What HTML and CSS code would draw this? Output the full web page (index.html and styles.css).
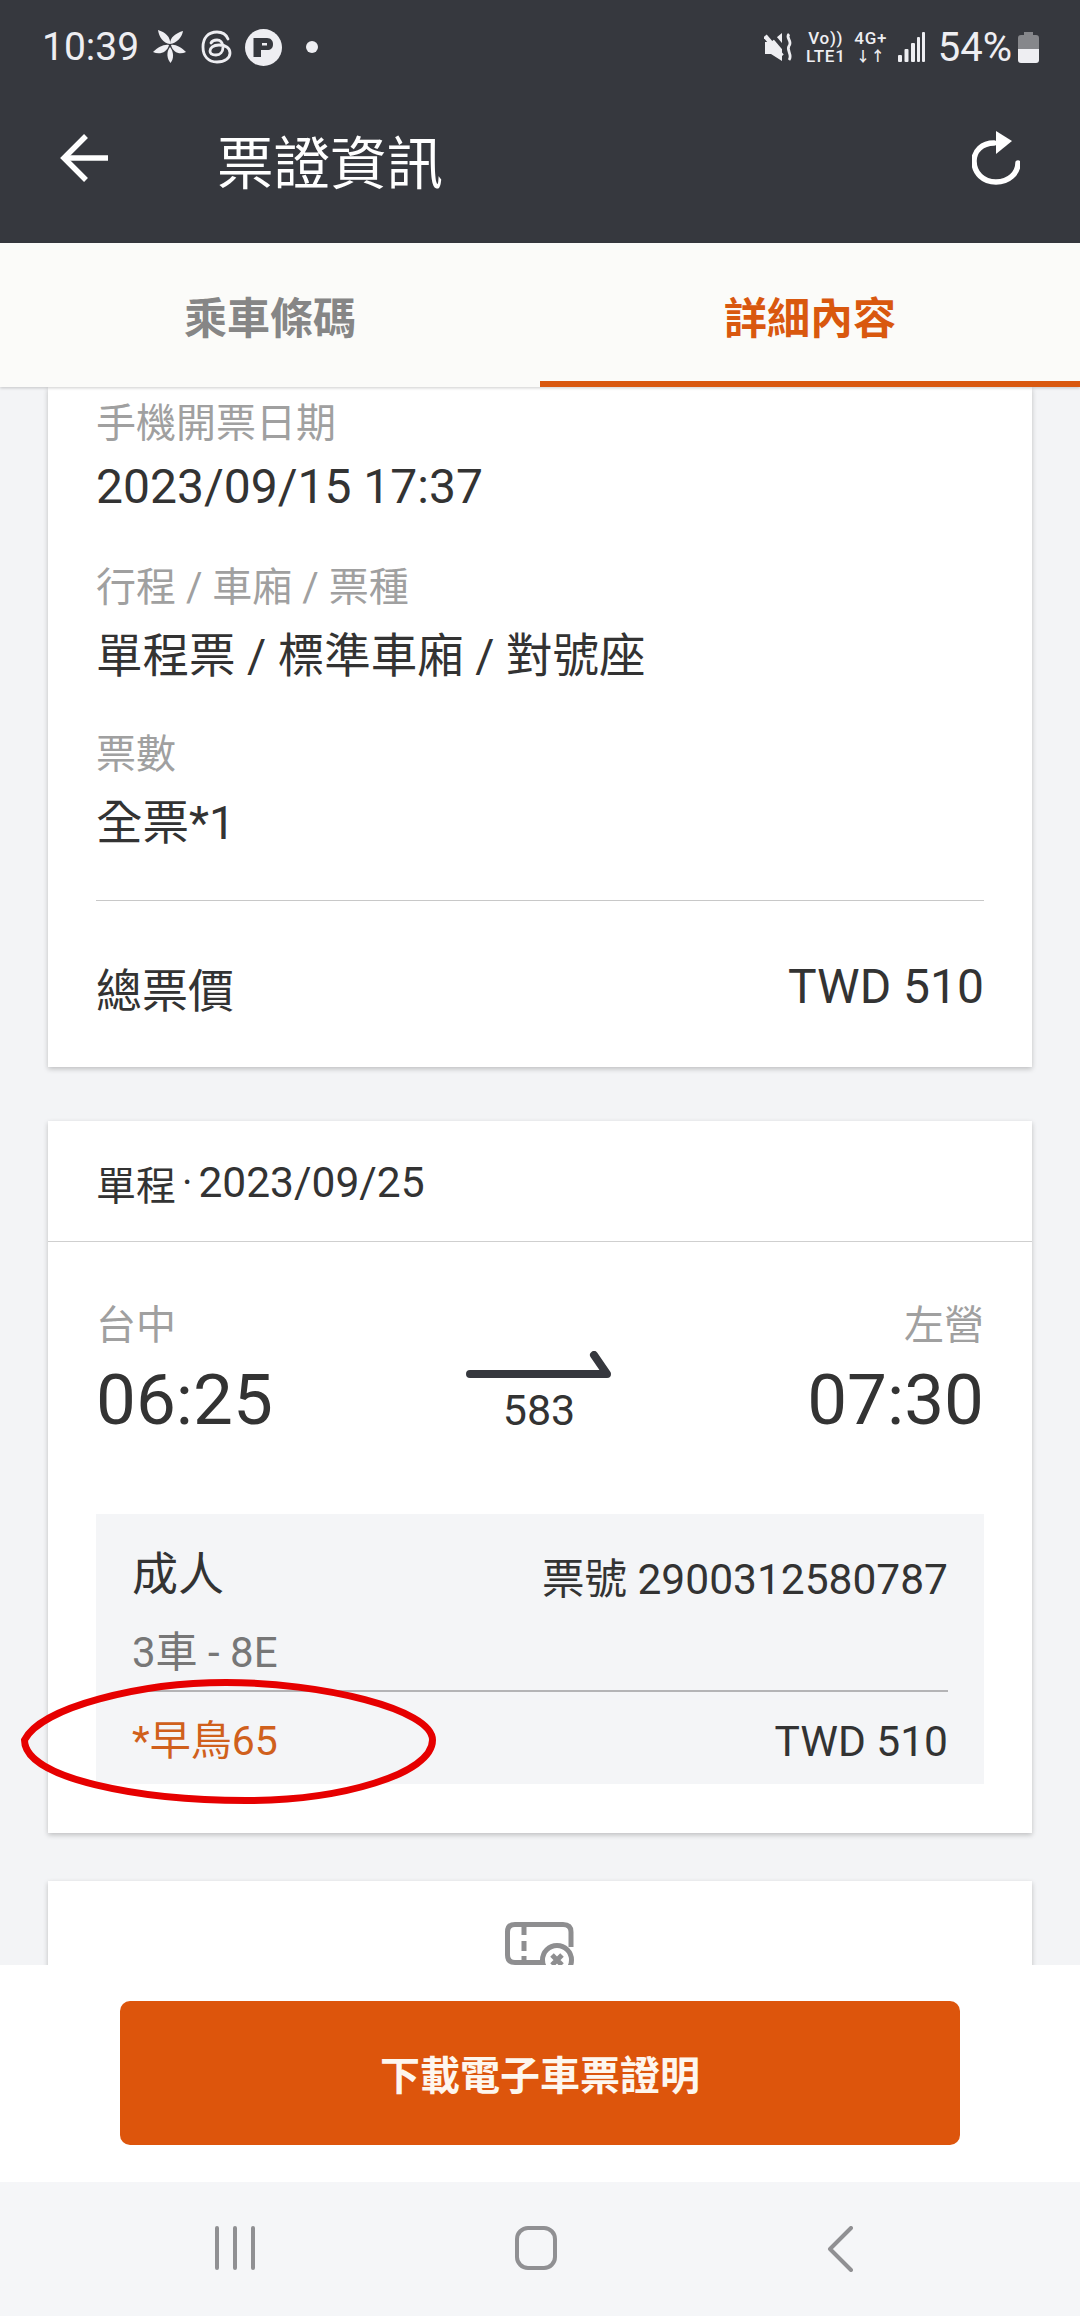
FILE: index.html
```html
<!DOCTYPE html>
<html lang="zh-Hant">
<head>
<meta charset="utf-8">
<title>票證資訊</title>
<link rel="stylesheet" href="styles.css">
</head>
<body>
<div class="app">
  <header class="top">
    <div class="status">
      <div class="status-left">
        <span class="clock">10:39</span>
        <svg class="ic-petal" viewBox="0 0 34 34"><g fill="#eeeef2"><path d="M17 14C10 13 6 7 5 0C12 2 18 7 17 14Z"/><path d="M17 14C17 7 23 3 30 1C29 7 24 13 17 14Z"/><path d="M16 15C11 14 5 17 0 22C6 25 14 23 16 15Z"/><path d="M18 15C22 14 28 17 33 22C27 25 20 23 18 15Z"/><path d="M17 17C13 22 14 29 17.500 33C21 29 21 22 17 17Z"/></g></svg>
        <svg class="ic-threads" viewBox="0 0 32 34" fill="none" stroke="#eeeef2" stroke-width="2.800" stroke-linecap="round"><path d="M27 9C25 4 21 2 16 2C7 2 2 8 2 17C2 26 7 32 16 32C24 32 29 28 29 23C29 18 25 15 18 15C12 15 9 18 9 21C9 24 12 25 15 25C19 25 22 22 22 17C22 12 19 10 16 10C13 10 11 11 10 13"/></svg>
        <svg class="ic-p" viewBox="0 0 37 37"><circle cx="18.500" cy="18.500" r="18.500" fill="#eeeef2"/><path d="M8.500 9H22C26 9 28 12 28 15C28 19 26 21 22 21H16V28H8.500Z" fill="#36383e"/><rect x="17" y="14" width="5" height="2.500" fill="#eeeef2"/></svg>
        <span class="dot"></span>
      </div>
      <div class="status-right">
        <svg class="ic-mute" viewBox="0 0 30 30"><path d="M1 10H7L18 1V29L7 22H1Z" fill="#eeeef2"/><path d="M6 0L23 20" stroke="#36383e" stroke-width="4"/><path d="M1 4L18 24" stroke="#eeeef2" stroke-width="4.500"/><path d="M25 2C21 6 29 9 25 14C22 18 29 23 25 28" fill="none" stroke="#eeeef2" stroke-width="2.800"/></svg>
        <span class="net net-vo"><span>Vo))</span><span>LTE1</span></span>
        <span class="net net-4g"><span>4G+</span><span class="arrows">↓↑</span></span>
        <svg class="ic-signal" viewBox="0 0 27 30"><g fill="#eeeef2"><rect x="0" y="23" width="4" height="7" rx="1"/><rect x="6.500" y="17" width="4" height="13" rx="1"/><rect x="13" y="11" width="4" height="19" rx="1"/><rect x="19" y="5" width="3" height="25" rx="1"/><rect x="24" y="0" width="3" height="30" rx="1"/></g></svg>
        <span class="battery-text">54%</span>
        <svg class="ic-batt" viewBox="0 0 21 31"><path d="M6 0H15V3H18C20 3 21 4 21 6V17H0V6C0 4 1 3 3 3H6Z" fill="#86878b"/><path d="M0 17H21V28C21 30 20 31 18 31H3C1 31 0 30 0 28Z" fill="#eeeef2"/></svg>
      </div>
    </div>
    <div class="toolbar">
      <svg class="ic-back" viewBox="0 0 48 48" fill="none" stroke="#fff" stroke-width="5.500"><path d="M48 24H4"/><path d="M26 2L4 24L26 46"/></svg>
      <h1 class="title">票證資訊</h1>
      <svg class="ic-refresh" viewBox="0 0 48 54" fill="none"><path d="M22 12C10 12 2 20 2 30C2 42 11 51 24 51C37 51 46 42 46 32" stroke="#fff" stroke-width="5.500" stroke-linecap="round"/><path d="M24 0L40 10L24 23Z" fill="#fff"/></svg>
    </div>
  </header>

  <nav class="tabs">
    <div class="tab">乘車條碼</div>
    <div class="tab tab-active">詳細內容</div>
  </nav>

  <main class="scroll">
    <section class="card card-info">
      <div class="field">
        <div class="label">手機開票日期</div>
        <div class="value"><span class="num">2023/09/15 17:37</span></div>
      </div>
      <div class="field">
        <div class="label">行程 / 車廂 / 票種</div>
        <div class="value">單程票 / 標準車廂 / 對號座</div>
      </div>
      <div class="field">
        <div class="label">票數</div>
        <div class="value">全票*1</div>
      </div>
      <div class="total">
        <span>總票價</span>
        <span class="num">TWD 510</span>
      </div>
    </section>

    <section class="card card-trip">
      <div class="trip-head"><span>單程</span><span class="sep">·</span><span class="trip-date">2023/09/25</span></div>
      <div class="trip-body">
        <div class="route">
          <div class="stop">
            <div class="stop-name">台中</div>
            <div class="stop-time">06:25</div>
          </div>
          <div class="train">
            <svg class="ic-train" viewBox="0 0 146 30" fill="none" stroke="#36383e" stroke-width="8" stroke-linecap="round" stroke-linejoin="round"><path d="M4 23H141L128 4"/></svg>
            <div class="train-no">583</div>
          </div>
          <div class="stop stop-end">
            <div class="stop-name">左營</div>
            <div class="stop-time">07:30</div>
          </div>
        </div>
        <div class="passenger">
          <div class="pax-row">
            <span class="pax-type">成人</span>
            <span class="pax-no">票號 2900312580787</span>
          </div>
          <div class="pax-seat">3車 - 8E</div>
          <div class="pax-foot">
            <span class="pax-disc">*早鳥65</span>
            <span class="pax-price">TWD 510</span>
          </div>
        </div>
      </div>
      <svg class="circle-mark" viewBox="0 0 415 125" fill="none" stroke="#e60000" stroke-width="7"><path d="M3.500 61C20 28 120 3.500 205 3.500C300 3.500 411.500 30 411.500 61C411.500 95 320 121.500 225 121.500C120 121.500 3.500 100 3.500 61Z"/></svg>
    </section>

    <section class="card card-more">
      <svg class="ic-cancel" viewBox="0 0 70 60" fill="none" stroke="#8e8e90" stroke-width="5"><path d="M66 25V10C66 5 63 2.500 58 2.500H10C5 2.500 2.500 5 2.500 10V33C2.500 38 5 40.500 10 40.500H36"/><path d="M19 2V13M19 19V29M19 34V41"/><circle cx="52" cy="38" r="14.500" fill="#fff"/><path d="M47 33L57 43M57 33L47 43"/></svg>
    </section>
  </main>

  <div class="footer">
    <button class="download">下載電子車票證明</button>
  </div>

  <div class="sysnav">
    <svg class="ic-recent" viewBox="0 0 42 44" fill="none" stroke="#909093" stroke-width="4" stroke-linecap="round"><path d="M3 2V42M21 2V42M39 2V42"/></svg>
    <svg class="ic-home" viewBox="0 0 42 44" fill="none" stroke="#909093" stroke-width="4"><rect x="2" y="2" width="38" height="40" rx="11"/></svg>
    <svg class="ic-navback" viewBox="0 0 26 46" fill="none" stroke="#909093" stroke-width="4" stroke-linecap="round" stroke-linejoin="round"><path d="M24 2L3 23L24 44"/></svg>
  </div>
</div>
</body>
</html>
```

FILE: styles.css
```css
* { box-sizing: border-box; }
html, body { margin: 0; padding: 0; }
body {
  font-family: Roboto, "Noto Sans CJK TC", sans-serif;
  color: #333;
  background: #f3f4f6;
}
.app {
  display: flex;
  flex-direction: column;
  width: 1080px;
  height: 2316px;
  overflow: hidden;
}

/* header */
.top { background: #36383e; height: 243px; flex: none; }
.status {
  display: flex;
  justify-content: space-between;
  align-items: center;
  height: 94px;
  padding: 0 41px 0 42px;
  color: #eeeef2;
}
.status-left, .status-right { display: flex; align-items: center; }
.clock { font-size: 39px; width: 111px; }
.ic-petal { width: 34px; height: 34px; margin-right: 14px; }
.ic-threads { width: 32px; height: 34px; margin-right: 12px; }
.ic-p { width: 37px; height: 37px; margin-right: 24px; }
.dot { width: 12px; height: 12px; border-radius: 50%; background: #eeeef2; }
.ic-mute { width: 30px; height: 30px; margin-right: 11px; }
.net {
  display: flex;
  flex-direction: column;
  align-items: center;
  font-size: 17px;
  font-weight: 500;
  letter-spacing: .7px;
  line-height: 18px;
  white-space: nowrap;
}
.net-vo { width: 42px; margin-right: 6px; }
.net-4g { width: 36px; margin-right: 9px; }
.arrows { font-size: 14px; font-weight: 700; }
.ic-signal { width: 27px; height: 30px; margin-right: 13px; }
.battery-text { font-size: 40px; margin-right: 6px; }
.ic-batt { width: 21px; height: 31px; }

.toolbar {
  display: flex;
  align-items: center;
  height: 138px;
  padding: 0 60px 10px;
}
.ic-back { width: 48px; height: 48px; }
.title {
  flex: 1;
  margin: 14px 0 0 109px;
  font-size: 56.500px;
  font-weight: 400;
  color: #fff;
  line-height: 1;
}
.ic-refresh { width: 48px; height: 54px; }

/* tabs */
.tabs {
  display: flex;
  flex: none;
  height: 144px;
  background: #fbfbf9;
  box-shadow: 0 1px 3px rgba(0,0,0,.2);
  position: relative;
  z-index: 1;
}
.tab {
  flex: 1;
  display: flex;
  align-items: center;
  justify-content: center;
  font-size: 43px;
  font-weight: 700;
  color: #868686;
}
.tab-active { color: #d9580f; border-bottom: 6px solid #d9580f; padding-top: 6px; }

/* scroll area */
.scroll {
  flex: 1;
  min-height: 0;
  overflow: hidden;
  padding: 0 48px;
  display: flex;
  flex-direction: column;
}
.card {
  flex: none;
  position: relative;
  background: #fff;
  box-shadow: 0 2px 5px rgba(0,0,0,.22);
}
.card-info { padding: 12px 48px 0; height: 680px; }
.field { margin-bottom: 41px; }
.field:first-child { margin-bottom: 43px; }
.field:nth-child(3) { margin-bottom: 38px; }
.label { font-size: 40px; line-height: 50px; color: #a0a0a0; }
.value { font-size: 46.500px; line-height: 66px; color: #333; margin-top: 10px; }
.field:first-child .value { margin-top: 5px; }
.num { font-size: 48px; }
.total {
  display: flex;
  justify-content: space-between;
  align-items: center;
  margin-top: 44px;
  height: 167px;
  padding-top: 5px;
  border-top: 1px solid #c8c8c8;
  font-size: 46px;
}

.card-trip { height: 712px; margin-top: 54px; }
.trip-head {
  display: flex;
  align-items: center;
  height: 121px;
  padding: 3px 0 0 48px;
  font-size: 40px;
  border-bottom: 1px solid #cfcfcf;
}
.sep { margin: 0 6px; }
.trip-date { font-size: 42.500px; }
.trip-body { padding: 0 48px; }
.route {
  display: flex;
  justify-content: space-between;
  height: 272px;
  padding-top: 58px;
}
.stop { width: 200px; }
.stop-end { text-align: right; }
.stop-name { font-size: 40px; line-height: 52px; color: #a0a0a0; }
.stop-time { font-size: 71px; line-height: 90px; color: #333; margin-top: 3px; }
.train { display: flex; flex-direction: column; align-items: center; padding-top: 51px; margin-left: -2px; }
.ic-train { width: 146px; height: 30px; }
.train-no { font-size: 43px; line-height: 50px; margin-top: 4px; }

.passenger { background: #f4f5f7; height: 270px; padding: 28px 36px 0; }
.pax-row { display: flex; justify-content: space-between; align-items: center; height: 62px; }
.pax-type { font-size: 46px; margin-top: -6px; }
.pax-no { font-size: 42.500px; margin-top: 5px; }
.pax-seat {
  font-size: 42px;
  line-height: 60px;
  color: #777;
  height: 88px;
  padding-top: 19px;
  border-bottom: 2px solid #b4b4b6;
}
.pax-foot { display: flex; justify-content: space-between; align-items: center; height: 90px; font-size: 42.500px; }
.pax-disc { color: #d0601c; font-size: 41px; }
.pax-price { margin-top: 8px; }

.circle-mark {
  position: absolute;
  left: -27px;
  top: 558px;
  width: 415px;
  height: 125px;
}

.card-more { height: 300px; margin-top: 48px; display: flex; justify-content: center; padding-top: 41px; }
.ic-cancel { width: 70px; height: 60px; }

/* footer */
.footer {
  flex: none;
  height: 217px;
  padding: 36px 120px 0;
  background: #fff;
  position: relative;
}
.download {
  display: block;
  width: 100%;
  height: 144px;
  border: 0;
  border-radius: 10px;
  background: #dd550c;
  color: #fdf6ee;
  font-family: inherit;
  font-size: 40px;
  font-weight: 700;
}
.sysnav {
  flex: none;
  height: 134px;
  background: #f5f6f8;
  position: relative;
  display: grid;
  grid-template-columns: 214px 42px 259px 42px 270px 26px;
  padding-top: 44px;
  align-items: start;
}
.ic-recent { grid-column: 2; width: 42px; height: 44px; }
.ic-home { grid-column: 4; width: 42px; height: 44px; }
.ic-navback { grid-column: 6; width: 26px; height: 46px; }
```
